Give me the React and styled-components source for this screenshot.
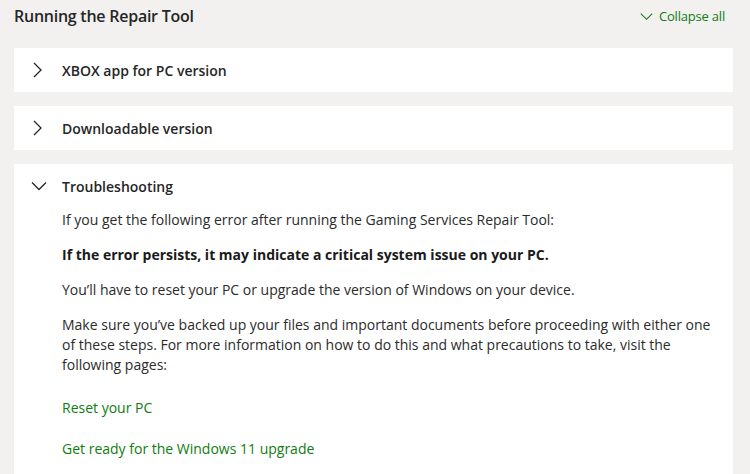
import styled, { createGlobalStyle } from 'styled-components';

const GlobalStyle = createGlobalStyle`
  body {
    margin: 0;
    background: #f2f1f0;
    font-family: "Open Sans", "Noto Sans", sans-serif;
    color: #262626;
  }
`;

const Page = styled.div`
  padding: 0 17px 0 14px;
  height: 474px;
  overflow: hidden;
`;

const TopBar = styled.div`
  display: flex;
  align-items: center;
  justify-content: space-between;
  height: 32px;
  margin-bottom: 16px;
`;

const Heading = styled.h2`
  margin: 0;
  font-size: 16px;
  font-weight: 600;
  letter-spacing: -0.25px;
  color: #262626;
`;

const CollapseAll = styled.button`
  display: flex;
  align-items: center;
  gap: 6px;
  border: 0;
  background: none;
  padding: 0 8px 0 0;
  font: inherit;
  font-size: 13px;
  letter-spacing: -0.2px;
  color: #107c10;
  cursor: pointer;
`;

const List = styled.div`
  display: flex;
  flex-direction: column;
  gap: 14px;
`;

const Card = styled.section`
  background: #fff;
`;

const Header = styled.button`
  display: flex;
  align-items: center;
  gap: 15px;
  width: 100%;
  height: 44px;
  padding: 0 0 0 17px;
  border: 0;
  background: none;
  font: inherit;
  font-size: 14px;
  font-weight: 600;
  color: #262626;
  text-align: left;
  cursor: pointer;
`;

const Body = styled.div`
  padding: 2px 20px 0 48px;
  font-size: 14px;
  line-height: 20px;
  color: #2b2b2b;
`;

const Para = styled.p`
  margin: 0 0 15px;
  font-weight: ${p => (p.$strong ? 700 : 400)};
  color: ${p => (p.$strong ? '#1a1a1a' : '#2b2b2b')};
`;

const Links = styled.div`
  padding-top: 8px;
`;

const Link = styled.a`
  display: block;
  margin: 0 0 21px;
  color: #107c10;
  text-decoration: none;
`;

// right-pointing when closed, down when open
const Chevron = ({ open, size = 16, color = '#262626' }) => (
  <svg width={size} height={size} viewBox="0 0 16 16" fill="none">
    <path
      d={open ? 'M1 4.5 8 11.5l7-7' : 'M3 1l7 7-7 7'}
      stroke={color}
      strokeWidth="1.3"
    />
  </svg>
);

const sections = [
  { id: 'app', title: 'XBOX app for PC version' },
  { id: 'download', title: 'Downloadable version' },
];

export default function App() {
  return (
    <Page>
      <GlobalStyle />
      <TopBar>
        <Heading>Running the Repair Tool</Heading>
        <CollapseAll type="button">
          <Chevron open size={13} color="#107c10" />
          Collapse all
        </CollapseAll>
      </TopBar>
      <List>
        {sections.map(s => (
          <Card key={s.id}>
            <Header type="button">
              <Chevron />
              {s.title}
            </Header>
          </Card>
        ))}
        <Card>
          <Header type="button">
            <Chevron open />
            Troubleshooting
          </Header>
          <Body>
            <Para>If you get the following error after running the Gaming Services Repair Tool:</Para>
            <Para $strong>If the error persists, it may indicate a critical system issue on your PC.</Para>
            <Para>You’ll have to reset your PC or upgrade the version of Windows on your device.</Para>
            <Para>
              Make sure you’ve backed up your files and important documents before proceeding with
              either one of these steps. For more information on how to do this and what precautions
              to take, visit the following pages:
            </Para>
            <Links>
              <Link href="#">Reset your PC</Link>
              <Link href="#">Get ready for the Windows 11 upgrade</Link>
            </Links>
          </Body>
        </Card>
      </List>
    </Page>
  );
}
